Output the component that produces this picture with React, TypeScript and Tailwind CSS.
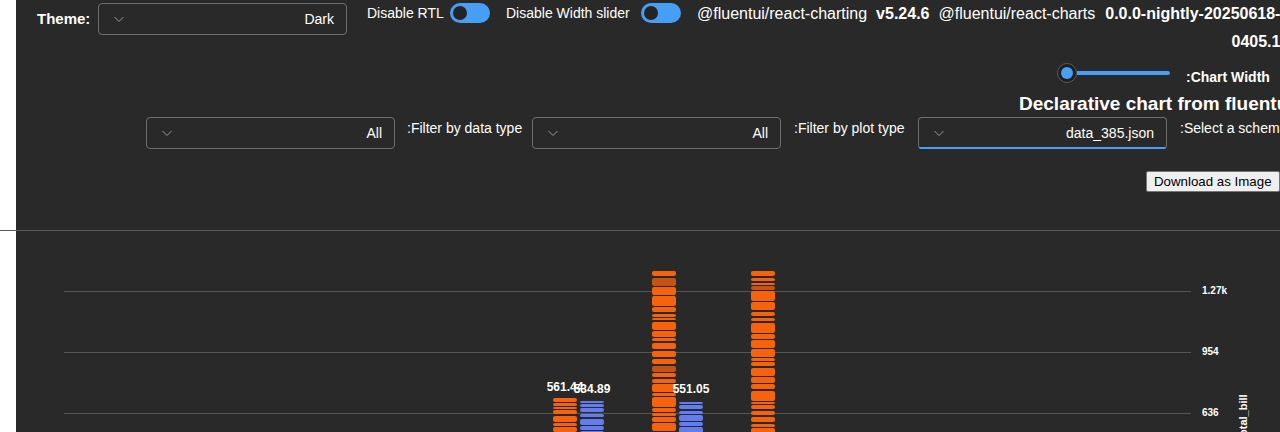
import React from "react";

const font = { fontFamily: '"Liberation Sans", Arial, sans-serif' };

const Chevron = () => (
  <svg width="12" height="12" viewBox="0 0 12 12" fill="none">
    <path d="M1.5 4 L6 8.5 L10.5 4" stroke="#9a9a9a" strokeWidth="1" />
  </svg>
);

const Dropdown = ({ value, focused }: { value: string; focused?: boolean }) => (
  <div
    className={
      "relative flex h-[32px] w-[249px] shrink-0 items-center justify-between rounded-[4px] border border-[#6e6e6e] pl-[14px] pr-[12px] text-[14px] text-white" +
      (focused ? " border-b-[#479ef5]" : "")
    }
  >
    <Chevron />
    <span>{value}</span>
    {focused && <div className="absolute bottom-[-1px] left-0 right-0 h-[2px] rounded-b-[4px] bg-[#479ef5]" />}
  </div>
);

const Toggle = () => (
  <div className="flex h-[20px] w-[40px] shrink-0 items-center rounded-full bg-[#479ef5] pl-[3px]">
    <div className="h-[14px] w-[14px] rounded-full bg-[#242424]" />
  </div>
);

// deterministic stripe pattern for the bars
const stripes = (top: number, bottom: number, seed: number) => {
  let s = seed;
  const rnd = () => {
    s = (s * 9301 + 49297) % 233280;
    return s / 233280;
  };
  const hs = [2, 3, 3, 4, 5, 6, 8, 10];
  const out: { y: number; h: number; dim: boolean }[] = [];
  let y = top;
  while (y < bottom) {
    const h = hs[Math.floor(rnd() * hs.length)];
    out.push({ y, h, dim: rnd() < 0.06 });
    y += h + (rnd() < 0.6 ? 1 : 2);
  }
  return out;
};

const Bar = ({ x, top, color, seed }: { x: number; top: number; color: string; seed: number }) => (
  <g>
    {stripes(top, 205, seed).map((r, i) => (
      <rect key={i} x={x} y={r.y} width={24} height={r.h} rx={2} fill={color} opacity={r.dim ? 0.75 : 1} />
    ))}
  </g>
);

const Chart = () => {
  const orange = "#f7630c";
  const blue = "#637cef";
  return (
    <svg width="1264" height="201" className="block">
      {[60, 121, 182].map((y) => (
        <line key={y} x1={48} x2={1175} y1={y + 0.5} y2={y + 0.5} stroke="#555" strokeWidth="1" />
      ))}
      {[
        ["1.27k", 60],
        ["954", 121],
        ["636", 182],
      ].map(([t, y]) => (
        <text key={t as string} x={1186} y={y as number} dominantBaseline="middle" fontSize="10" fontWeight="600" fill="#fff" style={font}>
          {t}
        </text>
      ))}
      <text
        x={1228}
        y={186}
        transform="rotate(-90 1228 186)"
        textAnchor="middle"
        dominantBaseline="middle"
        fontSize="11"
        fontWeight="600"
        fill="#fff"
        style={font}
      >
        total_bill
      </text>
      <Bar x={537} top={167} color={orange} seed={7} />
      <Bar x={564} top={170} color={blue} seed={21} />
      <Bar x={636} top={40} color={orange} seed={33} />
      <Bar x={663} top={171} color={blue} seed={45} />
      <Bar x={735} top={40} color={orange} seed={58} />
      {[
        ["561.44", 549, 157],
        ["534.89", 576, 159],
        ["551.05", 675, 159],
      ].map(([t, x, y]) => (
        <text key={t as string} x={x as number} y={y as number} textAnchor="middle" dominantBaseline="middle" fontSize="12" fontWeight="700" fill="#fff" style={font}>
          {t}
        </text>
      ))}
    </svg>
  );
};

export default function App() {
  return (
    <div className="h-[432px] w-[1280px] overflow-hidden bg-white" style={font}>
      <div className="ml-4 h-[230px] overflow-hidden bg-[#292929] text-white">
        {/* top controls */}
        <div className="flex h-[59px] items-start whitespace-nowrap pl-[21px] pt-[3px]">
          <div className="flex shrink-0 items-center">
            <span className="w-[61px] shrink-0 text-[15px] font-bold">Theme:</span>
            <Dropdown value="Dark" />
          </div>
          <span className="ml-[20px] w-[83px] shrink-0 text-[14px] leading-[20px]">Disable RTL</span>
          <Toggle />
          <span className="ml-[16px] w-[135px] shrink-0 text-[14px] leading-[20px]">Disable Width slider</span>
          <Toggle />
          <div className="ml-[16px] mt-[-3px] flex-1 text-[16px] leading-[28px]">
            <div className="flex">
              <span>@fluentui/react-charting</span>
              <span className="ml-[9px] font-bold">v5.24.6</span>
              <span className="ml-[9px]">@fluentui/react-charts</span>
              <span className="ml-[10px] font-bold">0.0.0-nightly-20250618-</span>
            </div>
            <div className="text-right font-bold">0405.1</div>
          </div>
        </div>

        {/* chart width slider */}
        <div className="flex h-[28px] items-start whitespace-nowrap pl-[1041px]">
          <div className="mt-[4px] flex h-[20px] w-[113px] shrink-0 items-center">
            <div className="flex h-[20px] w-[20px] shrink-0 items-center justify-center rounded-full border border-[#5a5a5a] bg-[#1f1f1f]">
              <div className="h-[12px] w-[12px] rounded-full bg-[#479ef5]" />
            </div>
            <div className="h-[4px] flex-1 rounded-r-full bg-[#479ef5]" />
          </div>
          <span className="ml-[16px] mt-[8px] text-[14px] font-semibold leading-[20px]">:Chart Width</span>
        </div>

        <div className="mt-[4px] whitespace-nowrap pl-[1003px] text-[19px] font-bold leading-[26px]">
          Declarative chart from fluentui
        </div>

        {/* filters */}
        <div className="flex items-start whitespace-nowrap pl-[130px] text-[14px] leading-[20px]">
          <Dropdown value="All" />
          <span className="w-[137px] shrink-0 pl-[12px] pt-[1px]">:Filter by data type</span>
          <Dropdown value="All" />
          <span className="w-[137px] shrink-0 pl-[13px] pt-[1px]">:Filter by plot type</span>
          <Dropdown value="data_385.json" focused />
          <span className="shrink-0 pl-[13px] pt-[1px]">:Select a schema</span>
        </div>

        <div className="mt-[20px] pl-[1130px]">
          <button className="h-[21px] whitespace-nowrap rounded-[2px] border border-[#767676] bg-[#efefef] px-[7px] text-[13.3px] leading-[17px] text-black">
            Download as Image
          </button>
        </div>
      </div>
      <div className="h-px w-full bg-[#5a5a5a]" />
      <div className="ml-4 h-[201px] overflow-hidden bg-[#292929]">
        <Chart />
      </div>
    </div>
  );
}
